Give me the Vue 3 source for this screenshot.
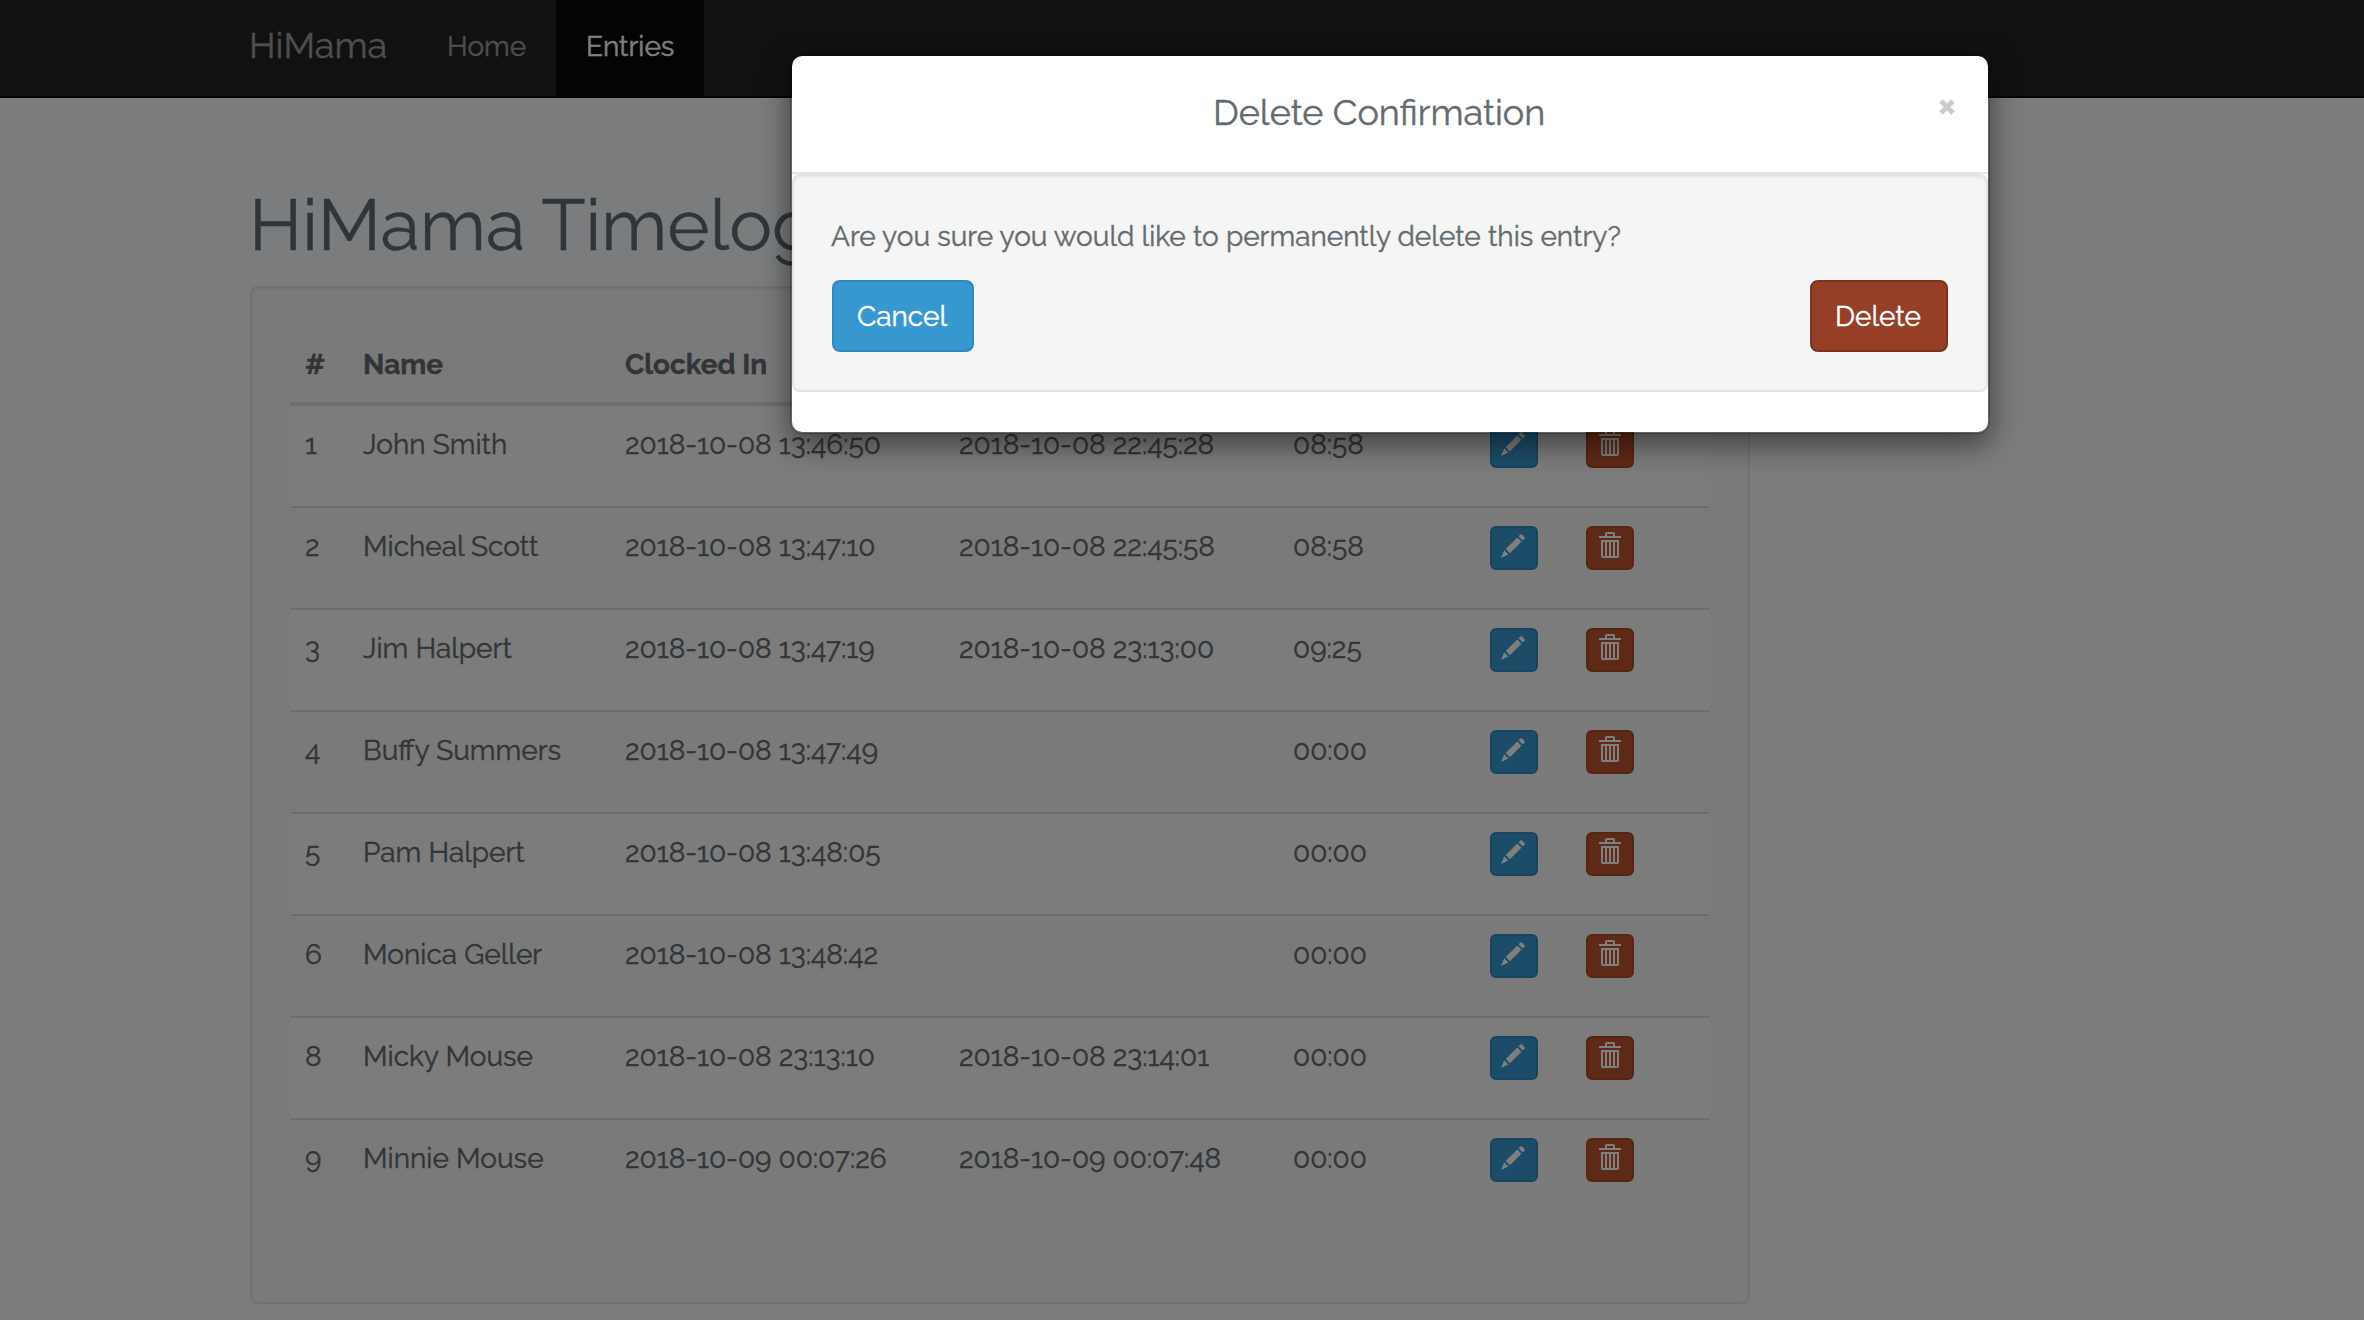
<script setup>
const entries = [
  { id: 1, name: 'John Smith', clockedIn: '2018-10-08 13:46:50', clockedOut: '2018-10-08 22:45:28', hours: '08:58' },
  { id: 2, name: 'Micheal Scott', clockedIn: '2018-10-08 13:47:10', clockedOut: '2018-10-08 22:45:58', hours: '08:58' },
  { id: 3, name: 'Jim Halpert', clockedIn: '2018-10-08 13:47:19', clockedOut: '2018-10-08 23:13:00', hours: '09:25' },
  { id: 4, name: 'Buffy Summers', clockedIn: '2018-10-08 13:47:49', clockedOut: '', hours: '00:00' },
  { id: 5, name: 'Pam Halpert', clockedIn: '2018-10-08 13:48:05', clockedOut: '', hours: '00:00' },
  { id: 6, name: 'Monica Geller', clockedIn: '2018-10-08 13:48:42', clockedOut: '', hours: '00:00' },
  { id: 8, name: 'Micky Mouse', clockedIn: '2018-10-08 23:13:10', clockedOut: '2018-10-08 23:14:01', hours: '00:00' },
  { id: 9, name: 'Minnie Mouse', clockedIn: '2018-10-09 00:07:26', clockedOut: '2018-10-09 00:07:48', hours: '00:00' },
]
</script>

<template>
  <div class="page">
    <nav class="navbar">
      <a class="brand">HiMama</a>
      <a class="nav-link">Home</a>
      <a class="nav-link active">Entries</a>
    </nav>

    <main class="content">
      <h1>HiMama Timelogs</h1>
      <section class="well">
        <table>
          <colgroup>
            <col class="c-id" /><col class="c-name" /><col class="c-time" /><col class="c-time" />
            <col class="c-hours" /><col class="c-edit" /><col class="c-delete" />
          </colgroup>
          <thead>
            <tr>
              <th>#</th><th>Name</th><th>Clocked In</th><th>Clocked Out</th><th>Hours</th><th></th><th></th>
            </tr>
          </thead>
          <tbody>
            <tr v-for="e in entries" :key="e.id">
              <td><span class="line">{{ e.id }}</span></td>
              <td><span class="line">{{ e.name }}</span></td>
              <td><span class="line">{{ e.clockedIn }}</span></td>
              <td><span class="line">{{ e.clockedOut }}</span></td>
              <td><span class="line">{{ e.hours }}</span></td>
              <td>
                <button class="icon-btn edit" aria-label="Edit">
                  <svg width="24" height="24" viewBox="0 0 24 24" fill="#fff">
                    <path d="M19.3 .6q.9-.9 1.8 0l2.3 2.3q.9.9 0 1.8l-1.7 1.7-4.1-4.1zM16.3 3.6l4.1 4.1L8.9 19.2l-4.1-4.1zM3.2 16.2l4.2 4.2L0 24z" />
                  </svg>
                </button>
              </td>
              <td>
                <button class="icon-btn remove" aria-label="Delete">
                  <svg width="22" height="26" viewBox="0 0 22 26" fill="#fff" fill-rule="evenodd">
                    <path d="M6 4V2q0-2 2-2h6q2 0 2 2v2h6v2H0V4zM8 4h6V2H8zM2 8h18v16q0 2-2 2H4q-2 0-2-2zM4 10v14h2V10zM8 10v14h2V10zM12 10v14h2V10zM16 10v14h2V10z" />
                  </svg>
                </button>
              </td>
            </tr>
          </tbody>
        </table>
      </section>
    </main>

    <div class="backdrop"></div>

    <div class="modal" role="dialog">
      <header class="modal-header">
        <h4>Delete Confirmation</h4>
        <button class="close" aria-label="Close">
          <svg width="16" height="16" viewBox="0 0 16 16" stroke="#ccc" stroke-width="5">
            <path d="M2 2l12 12M14 2L2 14" />
          </svg>
        </button>
      </header>
      <div class="modal-body">
        <p>Are you sure you would like to permanently delete this entry?</p>
        <div class="actions">
          <button class="btn cancel">Cancel</button>
          <button class="btn delete">Delete</button>
        </div>
      </div>
    </div>
  </div>
</template>

<style>
body { margin: 0; }
</style>

<style scoped>
* { box-sizing: border-box; }
.page {
  position: relative;
  width: 2364px;
  height: 1320px;
  overflow: hidden;
  background: #f5f8fa;
  color: #636b6f;
  font-family: Raleway, Lato, sans-serif;
  font-size: 28px;
  line-height: 44px;
  -webkit-text-stroke: .4px currentColor;
}
button { font: inherit; cursor: pointer; }
.navbar {
  display: flex;
  height: 98px;
  padding-left: 220px;
  background: #222;
  border-bottom: 2px solid #090909;
}
.brand, .nav-link { color: #9d9d9d; line-height: 94px; white-space: nowrap; }
.brand { width: 196px; padding-left: 29px; font-size: 36px; line-height: 90px; }
.nav-link { width: 140px; padding-left: 31px; }
.nav-link.active { width: 148px; padding-left: 30px; color: #fff; background: #090909; }
.content { padding: 88px 0 0 250px; }
h1 {
  margin: 0 0 0 -1px;
  height: 100px;
  font-size: 72px;
  line-height: 78px;
  font-weight: 400;
  white-space: nowrap;
}
.well {
  width: 1500px;
  height: 1018px;
  padding: 38px;
  background: #f5f5f5;
  border: 2px solid #e3e3e3;
  border-radius: 8px;
  box-shadow: inset 0 2px 2px rgba(0, 0, 0, .05);
}
table { width: 1420px; table-layout: fixed; border-collapse: separate; border-spacing: 0; }
.c-id { width: 57px; }
.c-name { width: 262px; }
.c-time { width: 334px; }
.c-hours { width: 197px; }
.c-edit { width: 96px; }
th {
  height: 80px;
  padding: 2px 0 0 16px;
  text-align: left;
  font-weight: 700;
  border-bottom: 4px solid #ddd;
}
td { height: 102px; padding: 18px 0 0 16px; vertical-align: top; border-top: 2px solid #ddd; white-space: nowrap; }
th:first-child, td:first-child { padding-left: 15px; }
tbody tr:first-child td { height: 100px; border-top: 0; }
tbody tr:nth-child(odd) { background: #f9f9f9; }
.line { display: block; line-height: 42px; }
.icon-btn {
  display: flex;
  width: 48px;
  height: 44px;
  border: 2px solid;
  border-radius: 6px;
}
.edit { padding: 6px 0 0 9px; background: #3a99d2; border-color: #3289be; }
.remove { padding: 4px 0 0 11px; background: #bf5330; border-color: #aa4a28; }
.backdrop { position: absolute; inset: 0; background: rgba(0, 0, 0, .5); }
.modal {
  position: absolute;
  left: 790px;
  top: 54px;
  width: 1200px;
  height: 380px;
  background: #fff;
  background-clip: padding-box;
  border: 2px solid rgba(0, 0, 0, .2);
  border-radius: 12px;
  box-shadow: 0 10px 30px rgba(0, 0, 0, .5);
}
.modal-header {
  display: flex;
  justify-content: space-between;
  height: 118px;
  padding: 43px 33px 0 421px;
  border-bottom: 2px solid #e5e5e5;
}
h4 { margin: -9px 0 0; font-size: 36px; line-height: 44px; font-weight: 400; white-space: nowrap; }
.close { width: 16px; height: 16px; padding: 0; border: 0; background: none; display: flex; }
.modal-body {
  height: 218px;
  padding: 39px 38px 0;
  background: #f5f5f5;
  border: 2px solid #e3e3e3;
  border-radius: 8px;
  box-shadow: inset 0 2px 2px rgba(0, 0, 0, .05);
}
p { margin: 0 0 21px -1px; white-space: nowrap; }
.actions { display: flex; justify-content: space-between; }
.btn { height: 72px; padding: 2px 0 0 23px; text-align: left; color: #fff; border: 2px solid; border-radius: 8px; }
.btn.cancel { width: 142px; background: #3798d0; border-color: #2e89be; }
.btn.delete { width: 138px; background: #954026; border-color: #7a331d; }
</style>
